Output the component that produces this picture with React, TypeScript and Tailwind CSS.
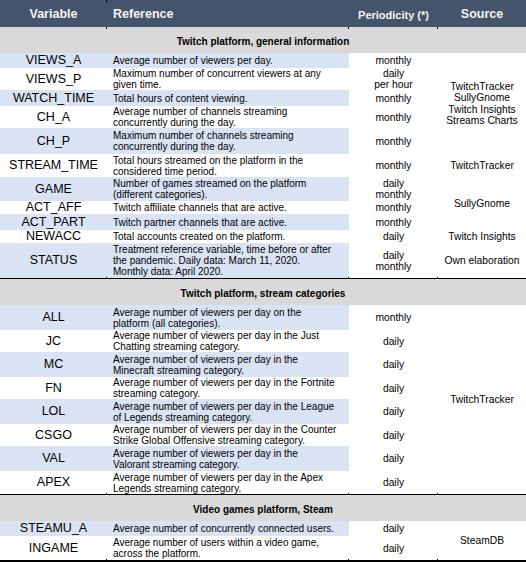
import React from "react";

type Row = {
  v: string;
  ref: string[];
  per: string[];
  h: number;
  shaded: boolean;
  src?: { lines: string[]; span: number };
};

type Section = { title: string; rows: Row[] };

const avg = "Average number of viewers per day";

const sections: Section[] = [
  {
    title: "Twitch platform, general information",
    rows: [
      { v: "VIEWS_A", ref: ["Average number of viewers per day."], per: ["monthly"], h: 15, shaded: true, src: { lines: ["TwitchTracker", "SullyGnome", "Twitch Insights", "Streams Charts"], span: 5 } },
      { v: "VIEWS_P", ref: ["Maximum number of concurrent viewers at any", "given time."], per: ["daily", "per hour"], h: 22, shaded: false },
      { v: "WATCH_TIME", ref: ["Total hours of content viewing."], per: ["monthly"], h: 16, shaded: true },
      { v: "CH_A", ref: ["Average number of channels streaming", "concurrently during the day."], per: ["monthly"], h: 22, shaded: false },
      { v: "CH_P", ref: ["Maximum number of channels streaming", "concurrently during the day."], per: ["monthly"], h: 26, shaded: true },
      { v: "STREAM_TIME", ref: ["Total hours streamed on the platform in the", "considered time period."], per: ["monthly"], h: 23, shaded: false, src: { lines: ["TwitchTracker"], span: 1 } },
      { v: "GAME", ref: ["Number of games streamed on the platform", "(different categories)."], per: ["daily", "monthly"], h: 24, shaded: true, src: { lines: ["SullyGnome"], span: 3 } },
      { v: "ACT_AFF", ref: ["Twitch affiliate channels that are active."], per: ["monthly"], h: 13, shaded: false },
      { v: "ACT_PART", ref: ["Twitch partner channels that are active."], per: ["monthly"], h: 16, shaded: true },
      { v: "NEWACC", ref: ["Total accounts created on the platform."], per: ["daily"], h: 13, shaded: false, src: { lines: ["Twitch Insights"], span: 1 } },
      { v: "STATUS", ref: ["Treatment reference variable, time before or after", "the pandemic. Daily data: March 11, 2020.", "Monthly data: April 2020."], per: ["daily", "monthly"], h: 35, shaded: true, src: { lines: ["Own elaboration"], span: 1 } },
    ],
  },
  {
    title: "Twitch platform, stream categories",
    rows: [
      { v: "ALL", ref: [avg + " on the", "platform (all categories)."], per: ["monthly"], h: 25, shaded: true, src: { lines: ["TwitchTracker"], span: 8 } },
      { v: "JC", ref: [avg + " in the Just", "Chatting streaming category."], per: ["daily"], h: 22, shaded: false },
      { v: "MC", ref: [avg + " in the", "Minecraft streaming category."], per: ["daily"], h: 25, shaded: true },
      { v: "FN", ref: [avg + " in the Fortnite", "streaming category."], per: ["daily"], h: 22, shaded: false },
      { v: "LOL", ref: [avg + " in the League", "of Legends streaming category."], per: ["daily"], h: 25, shaded: true },
      { v: "CSGO", ref: [avg + " in the Counter", "Strike Global Offensive streaming category."], per: ["daily"], h: 22, shaded: false },
      { v: "VAL", ref: [avg + " in the", "Valorant streaming category."], per: ["daily"], h: 25, shaded: true },
      { v: "APEX", ref: [avg + " in the Apex", "Legends streaming category."], per: ["daily"], h: 23, shaded: false },
    ],
  },
  {
    title: "Video games platform, Steam",
    rows: [
      { v: "STEAMU_A", ref: ["Average number of concurrently connected users."], per: ["daily"], h: 15, shaded: true, src: { lines: ["SteamDB"], span: 2 } },
      { v: "INGAME", ref: ["Average number of users within a video game,", "across the platform."], per: ["daily"], h: 24, shaded: false },
    ],
  },
];

const Ticks = ({ top }: { top: string }) => (
  <>
    <span className={`absolute ${top} left-[106px] w-px h-[2px] bg-black`} />
    <span className={`absolute ${top} left-[348px] w-px h-[2px] bg-black`} />
    <span className={`absolute ${top} left-[437px] w-px h-[2px] bg-black`} />
  </>
);

export default function App() {
  return (
    <div className="w-[526px] h-[563px] bg-white text-black font-['Liberation_Sans',Arial,sans-serif] overflow-hidden">
      <table className="w-[526px] table-fixed border-collapse">
        <colgroup>
          <col className="w-[107px]" />
          <col className="w-[242px]" />
          <col className="w-[89px]" />
          <col className="w-[88px]" />
        </colgroup>
        <thead>
          <tr className="h-[27px] bg-[#44546a] text-[#f4f4f4]">
            <th className="relative p-0 text-center align-middle text-[12.5px] font-bold leading-[14px]">
              <span className="absolute top-0 right-0 w-px h-[2px] bg-black" />
              Variable
            </th>
            <th className="p-0 pl-[6px] text-left align-middle text-[12.5px] font-bold leading-[14px]">Reference</th>
            <th className="p-0 text-center align-middle text-[11px] font-bold leading-[14px] pt-[2px]">Periodicity (*)</th>
            <th className="p-0 text-center align-middle text-[12.5px] font-bold leading-[14px]">Source</th>
          </tr>
        </thead>
        <tbody>
          {sections.map((sec, si) => (
            <React.Fragment key={sec.title}>
              {si > 0 && (
                <tr className="h-px">
                  <td colSpan={4} className="relative h-px p-0 bg-black">
                    <Ticks top="-top-[1px]" />
                  </td>
                </tr>
              )}
              <tr className="h-[26px]">
                <td colSpan={4} className="relative p-0 pt-[3px] bg-[#d9d9d9] text-center align-middle text-[10px] font-bold leading-[12px]">
                  {si === 0 && <Ticks top="top-0" />}
                  {sec.title}
                </td>
              </tr>
              {sec.rows.map((r) => (
                <tr key={r.v} style={{ height: r.h }}>
                  <td className={`p-0 text-center align-middle text-[12.5px] leading-[13px] whitespace-nowrap ${r.shaded ? "bg-[#dae3f3]" : ""}`}>
                    {r.v}
                  </td>
                  <td className={`p-0 pl-[6px] text-left align-middle text-[10px] leading-[11px] whitespace-nowrap ${r.shaded ? "bg-[#dae3f3]" : ""}`}>
                    {r.ref.map((l, i) => (
                      <div key={i}>{l}</div>
                    ))}
                  </td>
                  <td className="p-0 text-center align-middle text-[10.3px] leading-[11px] whitespace-nowrap">
                    {r.per.map((l, i) => (
                      <div key={i}>{l}</div>
                    ))}
                  </td>
                  {r.src && (
                    <td rowSpan={r.src.span} className="p-0 text-center align-middle text-[10.3px] leading-[11.5px] whitespace-nowrap">
                      {r.src.lines.map((l, i) => (
                        <div key={i}>{l}</div>
                      ))}
                    </td>
                  )}
                </tr>
              ))}
            </React.Fragment>
          ))}
          <tr className="h-[2px]">
            <td colSpan={4} className="relative h-[2px] p-0 bg-black">
              <Ticks top="-top-[1px]" />
            </td>
          </tr>
        </tbody>
      </table>
    </div>
  );
}
